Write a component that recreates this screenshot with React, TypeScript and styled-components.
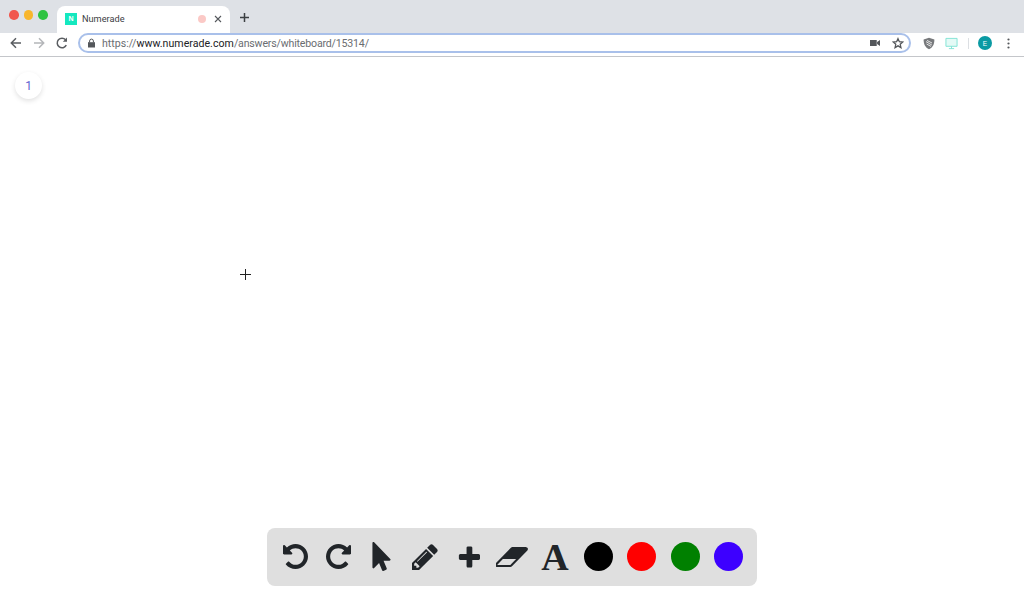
import React from "react";
import styled, { createGlobalStyle } from "styled-components";
import { FaMousePointer } from "react-icons/fa";

const Global = createGlobalStyle`
  html, body { margin: 0; padding: 0; background: #fff; overflow: hidden; }
  body { font-family: "Liberation Sans", Arial, sans-serif; }
`;

const Page = styled.div`
  width: 1024px;
  height: 592px;
  display: flex;
  flex-direction: column;
  overflow: hidden;
`;

const TabStrip = styled.div`
  height: 33px;
  background: #dee1e6;
  display: flex;
  align-items: flex-end;
  padding-left: 9px;
  flex: none;
`;

const Lights = styled.div`
  display: flex;
  gap: 5px;
  align-self: flex-start;
  margin-top: 10px;
  margin-right: 9.5px;
`;

const Light = styled.span<{ $c: string }>`
  width: 9.5px;
  height: 9.5px;
  border-radius: 50%;
  background: ${(p) => p.$c};
`;

const Tab = styled.div`
  width: 173px;
  height: 27px;
  background: #fff;
  border-radius: 8px 8px 0 0;
  display: flex;
  align-items: center;
  padding: 0 8.5px 2px 8px;
  box-sizing: border-box;
`;

const Favicon = styled.div`
  width: 12px;
  height: 12px;
  background: #14e8bf;
  color: #fff;
  font-size: 7px;
  font-weight: 700;
  display: flex;
  align-items: center;
  justify-content: center;
  margin-right: 5px;
`;

const TabTitle = styled.span`
  font-size: 9.2px;
  font-family: Roboto, "Liberation Sans", sans-serif;
  color: #3c4043;
  flex: 1;
`;

const Recording = styled.span`
  width: 8px;
  height: 8px;
  border-radius: 50%;
  background: #fbc9c6;
  margin-right: 8px;
`;

const NewTab = styled.div`
  margin-left: 9px;
  align-self: center;
  margin-top: 2px;
  display: flex;
`;

const NavBar = styled.div`
  background: #fff;
  border-bottom: 1px solid #c4c6ca;
  display: flex;
  align-items: center;
  flex: none;
  padding: 0 0 3px 9px;
  box-sizing: content-box;
  height: 20px;
`;

const NavIcon = styled.svg`
  width: 14px;
  height: 14px;
  flex: none;
  display: block;
`;

const NavButtons = styled.div`
  display: flex;
  gap: 9px;
  margin-right: 9px;
`;

const Omnibox = styled.div`
  width: 833px;
  height: 20px;
  box-sizing: border-box;
  border: 2px solid #a9c0ea;
  border-radius: 10px;
  display: flex;
  align-items: center;
  padding: 0 5px 0 7px;
  font-family: Roboto, "Liberation Sans", sans-serif;
  font-size: 10.6px;
`;

const Url = styled.div`
  flex: 1;
  margin-left: 6px;
  color: #6a6d71;
  letter-spacing: 0.02px;
`;

const Host = styled.span`
  color: #202124;
`;

const Path = styled.span`
  letter-spacing: -0.18px;
`;

const Extensions = styled.div`
  display: flex;
  align-items: center;
  margin-left: 12px;
`;

const Divider = styled.span`
  width: 1px;
  height: 11px;
  background: #dcdfe3;
  margin: 0 9px 0 10px;
`;

const Avatar = styled.span`
  width: 14px;
  height: 14px;
  border-radius: 50%;
  background: #0a9aa3;
  color: #fff;
  font-size: 6.5px;
  display: flex;
  align-items: center;
  justify-content: center;
  margin-right: 15px;
`;

const Canvas = styled.main`
  flex: 1;
  position: relative;
  display: flex;
  flex-direction: column;
  align-items: center;
  justify-content: flex-end;
  padding-bottom: 6px;
  min-height: 0;
`;

const PageBadge = styled.div`
  position: absolute;
  left: 15px;
  top: 15px;
  width: 27px;
  height: 27px;
  border-radius: 50%;
  background: #fff;
  box-shadow: 0 2px 5px rgba(0, 0, 0, 0.12);
  color: #5f5fd0;
  font-size: 12px;
  font-family: Roboto, "Liberation Sans", sans-serif;
  display: flex;
  align-items: center;
  justify-content: center;
`;

const Cursor = styled.svg`
  position: absolute;
  left: 240px;
  top: 212px;
  width: 11px;
  height: 11px;
`;

const Toolbar = styled.div`
  width: 490px;
  height: 58px;
  box-sizing: border-box;
  background: #dfdfdf;
  border-radius: 8px;
  display: flex;
  align-items: center;
  padding: 0 14px 0 6px;
  color: #212529;
`;

const Tool = styled.div`
  width: 43.4px;
  height: 30px;
  flex: none;
  display: flex;
  align-items: center;
  justify-content: center;
  margin-top: -1px;
`;

const ToolSvg = styled.svg<{ $nudge?: number }>`
  display: block;
  fill: currentColor;
  flex: none;
  margin-left: ${(p) => p.$nudge ?? 0}px;
`;

const FontGlyph = styled.span`
  font-family: "Liberation Serif", "Times New Roman", serif;
  font-weight: 700;
  font-size: 38px;
  line-height: 30px;
  color: #212529;
`;

const Swatch = styled.div<{ $c: string }>`
  width: 29px;
  height: 29px;
  border-radius: 50%;
  background: ${(p) => p.$c};
`;

const UNDO =
  "M1536 640q0 156-61 298t-164 245-245 164-298 61q-172 0-327-72.5t-264-204.5q-7-10-6.5-22.5t8.5-20.5l137-138q10-9 25-9 16 2 23 12 73 95 179 147t225 52q104 0 198.5-40.5t163.5-109.5 109.5-163.5 40.5-198.5-40.5-198.5-109.5-163.5-163.5-109.5-198.5-40.5q-98 0-188 35.5t-160 101.5l137 138q31 30 14 69-17 40-59 40h-448q-26 0-45-19t-19-45v-448q0-42 40-59 39-17 69 14l130 129q107-101 244.5-156.5t284.5-55.5q156 0 298 61t245 164 164 245 61 298z";
const PENCIL =
  "M363 1536l91-91-235-235-91 91v107h128v128h107zm523-928q0-22-22-22-10 0-17 7l-542 542q-7 7-7 17 0 22 22 22 10 0 17-7l542-542q7-7 7-17zm-54-192l416 416-832 832h-416v-416zm683 96q0 53-37 90l-166 166-416-416 166-165q36-38 90-38 53 0 91 38l235 234q37 39 37 91z";
const PLUS =
  "M1600 736v192q0 40-28 68t-68 28h-416v416q0 40-28 68t-68 28h-192q-40 0-68-28t-28-68v-416h-416q-40 0-68-28t-28-68v-192q0-40 28-68t68-28h416v-416q0-40 28-68t68-28h192q40 0 68 28t28 68v416h416q40 0 68 28t28 68z";
const ERASER =
  "M832 1408l336-384h-768l-336 384h768zm1013-1077q15 34 9.5 71.5t-30.5 65.5l-896 1024q-38 44-96 44h-768q-38 0-69.5-20.5t-47.5-54.5q-15-34-9.5-71.5t30.5-65.5l896-1024q38-44 96-44h768q38 0 70 20.5t47 54.5z";

const Back = () => (
  <NavIcon viewBox="0 0 14 14" fill="none" stroke="#5a5d61" strokeWidth="1.5">
    <path d="M12 7H2.5M7 2.3 2.3 7 7 11.7" />
  </NavIcon>
);
const Forward = () => (
  <NavIcon viewBox="0 0 14 14" fill="none" stroke="#b4b6b9" strokeWidth="1.5">
    <path d="M2 7h9.5M7 2.3 11.7 7 7 11.7" />
  </NavIcon>
);
const Reload = () => (
  <NavIcon viewBox="0 0 14 14" fill="none" stroke="#5a5d61" strokeWidth="1.5">
    <path d="M11.3 9.2A4.8 4.8 0 1 1 10.6 3.8" />
    <path d="M12 1.6v4.2H7.8z" fill="#5a5d61" stroke="none" />
  </NavIcon>
);

export default function App() {
  return (
    <Page>
      <Global />
      <TabStrip>
        <Lights>
          <Light $c="#f1584f" />
          <Light $c="#f8b62c" />
          <Light $c="#2fc342" />
        </Lights>
        <Tab>
          <Favicon>N</Favicon>
          <TabTitle>Numerade</TabTitle>
          <Recording />
          <svg width="8" height="8" viewBox="0 0 8 8" stroke="#55585c" strokeWidth="1.1">
            <path d="M1 1l6 6M7 1 1 7" />
          </svg>
        </Tab>
        <NewTab>
          <svg width="11" height="11" viewBox="0 0 11 11" stroke="#3c4043" strokeWidth="1.5">
            <path d="M5.5 1v9M1 5.5h9" />
          </svg>
        </NewTab>
      </TabStrip>
      <NavBar>
        <NavButtons>
          <Back />
          <Forward />
          <Reload />
        </NavButtons>
        <Omnibox>
          <svg width="9" height="10" viewBox="0 0 9 10" fill="#54575b">
            <path d="M1 4.2h7V9.5H1z" />
            <path d="M2.6 4.4V3a1.9 1.9 0 0 1 3.8 0v1.4" fill="none" stroke="#54575b" strokeWidth="1" />
          </svg>
          <Url>
            https://<Host>www.numerade.com</Host><Path>/answers/whiteboard/15314/</Path>
          </Url>
          <svg width="10" height="8" viewBox="0 0 11 8" fill="#54575b" style={{ marginRight: 12 }}>
            <path d="M0 .8h7.4v6.4H0zM7.8 3 11 .8v6.4L7.8 5z" />
          </svg>
          <svg width="12" height="12" viewBox="0 0 13 13" fill="none" stroke="#54575b" strokeWidth="1.4">
            <path d="M6.5 1.8 8 5.1l3.6.4-2.7 2.4.8 3.6-3.2-1.9-3.2 1.9.8-3.6-2.7-2.4L5 5.1z" />
          </svg>
        </Omnibox>
        <Extensions>
          <svg width="12" height="13" viewBox="0 0 12 13">
            <path d="M6 .8 11.4 2.4c0 4.6-1.6 8-5.4 9.8C2.2 10.4.6 7 .6 2.4z" fill="#77797c" />
            <path d="M3 4.6 8.8 8M3.6 7 8 9.4M4 3.4l5 2.6" stroke="#e4e4e4" strokeWidth="1" fill="none" />
          </svg>
          <svg width="13" height="13" viewBox="0 0 14 13" fill="none" stroke="#7fe3d4" strokeWidth="1" style={{ marginLeft: 10 }}>
            <path d="M1 1h12v8.5H1z" fill="#e4faf6" />
            <path d="M7 9.5V12M4.2 12h5.6" />
          </svg>
          <Divider />
          <Avatar>E</Avatar>
          <svg width="3" height="11" viewBox="0 0 3 11" fill="#54575b">
            <circle cx="1.5" cy="1.5" r="1.1" />
            <circle cx="1.5" cy="5.5" r="1.1" />
            <circle cx="1.5" cy="9.5" r="1.1" />
          </svg>
        </Extensions>
      </NavBar>
      <Canvas>
        <PageBadge>1</PageBadge>
        <Cursor viewBox="0 0 11 11" stroke="#222" strokeWidth="1">
          <path d="M5.5 0v11M0 5.5h11" />
        </Cursor>
        <Toolbar>
          <Tool>
            <ToolSvg $nudge={1.5} width="25" height="25" viewBox="0 -128 1536 1536"><path d={UNDO} /></ToolSvg>
          </Tool>
          <Tool>
            <ToolSvg $nudge={1.5} width="25" height="25" viewBox="0 -128 1536 1536">
              <g transform="matrix(-1 0 0 1 1536 0)"><path d={UNDO} /></g>
            </ToolSvg>
          </Tool>
          <Tool><FaMousePointer size={29} /></Tool>
          <Tool>
            <ToolSvg width="26" height="26" viewBox="0 128 1536 1536"><path d={PENCIL} /></ToolSvg>
          </Tool>
          <Tool>
            <ToolSvg width="24" height="24" viewBox="0 32 1600 1600"><path d={PLUS} /></ToolSvg>
          </Tool>
          <Tool>
            <ToolSvg width="32" height="20" viewBox="0 250 1860 1290" preserveAspectRatio="none"><path d={ERASER} /></ToolSvg>
          </Tool>
          <Tool><FontGlyph>A</FontGlyph></Tool>
          <Tool><Swatch $c="#000000" /></Tool>
          <Tool><Swatch $c="#ff0000" /></Tool>
          <Tool><Swatch $c="#008000" /></Tool>
          <Tool><Swatch $c="#3d00ff" /></Tool>
        </Toolbar>
      </Canvas>
    </Page>
  );
}
